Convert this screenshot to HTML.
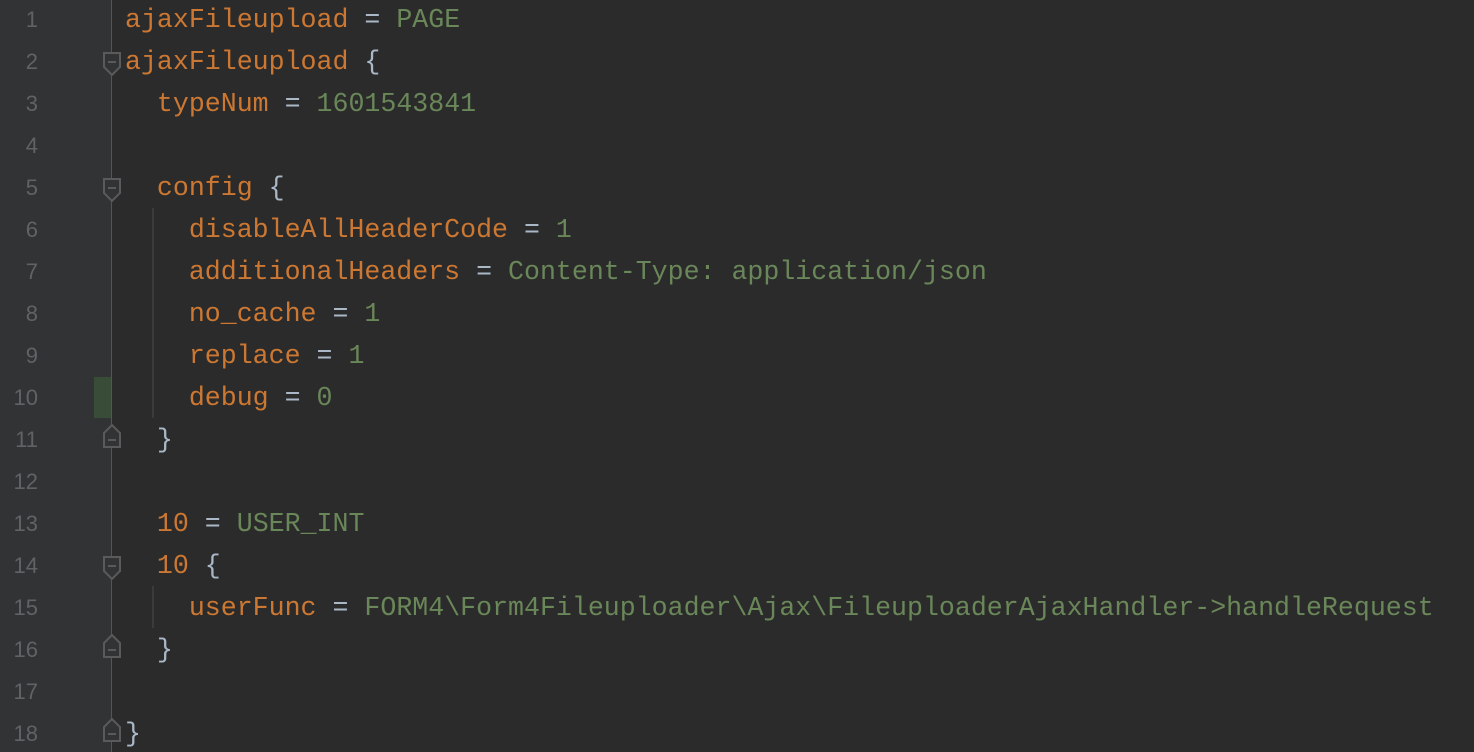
<!DOCTYPE html>
<html><head><style>
html,body{margin:0;padding:0;width:1474px;height:752px;overflow:hidden;background:#2b2b2b}
.g{position:absolute;left:0;top:0;width:111px;height:752px;background:#313335}
.sep{position:absolute;left:111px;top:0;width:1px;height:752px;background:#555555}
.ln{position:absolute;left:0;width:38px;text-align:right;font:22px "Liberation Sans",sans-serif;color:#606366}
.c{position:absolute;left:125px;white-space:pre;font:26.6px "Liberation Mono",monospace;color:#a9b7c6}
.k{color:#cc7832}.v{color:#6a8759}
.ig{position:absolute;width:2px;background:#3b3b3b;left:152px}
</style></head><body>
<div class="g"></div>
<div style="position:absolute;left:94px;top:377px;width:17px;height:41px;background:#384c38"></div>
<div class="sep"></div>
<div class="ig" style="top:208px;height:210px"></div>
<div class="ig" style="top:586px;height:42px"></div>
<div id="nums"></div>
<svg style="position:absolute;left:0;top:0" width="1474" height="752">
<g fill="#313335" stroke="#5a5a5a" stroke-width="2">
<path d="M104,53 H120 V67 L112,75 L104,67 Z"/>
<path d="M104,179 H120 V193 L112,201 L104,193 Z"/>
<path d="M104,557 H120 V571 L112,579 L104,571 Z"/>
<path d="M104,447 H120 V433 L112,425 L104,433 Z"/>
<path d="M104,657 H120 V643 L112,635 L104,643 Z"/>
<path d="M104,741 H120 V727 L112,719 L104,727 Z"/>
</g>
<g stroke="#5a5a5a" stroke-width="2">
<path d="M108,62 H116 M108,188 H116 M108,566 H116 M108,440 H116 M108,650 H116 M108,734 H116"/>
</g>
</svg>
<script>
var lines=[
'<span class="k">ajaxFileupload</span> = <span class="v">PAGE</span>',
'<span class="k">ajaxFileupload</span> {',
'  <span class="k">typeNum</span> = <span class="v">1601543841</span>',
'',
'  <span class="k">config</span> {',
'    <span class="k">disableAllHeaderCode</span> = <span class="v">1</span>',
'    <span class="k">additionalHeaders</span> = <span class="v">Content-Type: application/json</span>',
'    <span class="k">no_cache</span> = <span class="v">1</span>',
'    <span class="k">replace</span> = <span class="v">1</span>',
'    <span class="k">debug</span> = <span class="v">0</span>',
'  }',
'',
'  <span class="k">10</span> = <span class="v">USER_INT</span>',
'  <span class="k">10</span> {',
'    <span class="k">userFunc</span> = <span class="v">FORM4\\Form4Fileuploader\\Ajax\\FileuploaderAjaxHandler-&gt;handleRequest</span>',
'  }',
'',
'}'];
var h='';
for(var i=0;i<lines.length;i++){var t=i*42-2;
h+='<div class="ln" style="top:'+(t+9)+'px">'+(i+1)+'</div>';
h+='<div class="c" style="top:'+(t+7)+'px">'+lines[i]+'</div>';}
document.getElementById('nums').innerHTML=h;
</script>
</body></html>
